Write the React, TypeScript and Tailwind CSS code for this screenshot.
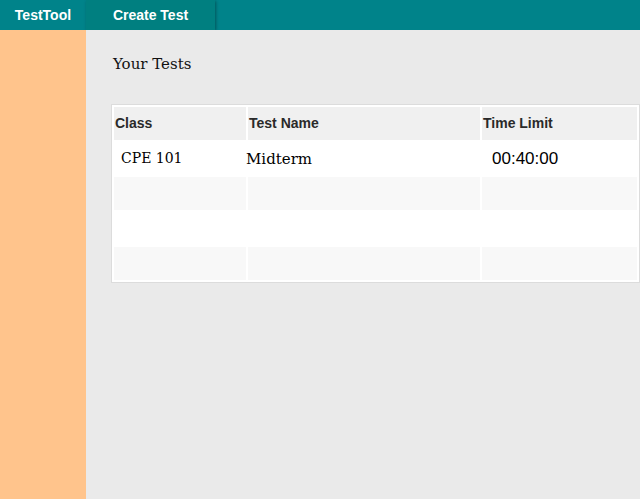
import React from "react";

const rows = [
  { cls: "CPE 101", name: "Midterm", time: "00:40:00" },
  { cls: "", name: "", time: "" },
  { cls: "", name: "", time: "" },
  { cls: "", name: "", time: "" },
];

export default function App() {
  return (
    <div className="h-[501px] w-[640px] overflow-hidden bg-white font-['Liberation_Sans',Arial,sans-serif]">
      {/* top bar */}
      <div className="flex h-[30px] bg-[#00838a]">
        <div className="flex w-[86px] items-center justify-center text-[14px] font-bold text-white">TestTool</div>
        <div className="flex w-[129px] items-center justify-center bg-[#007f80] text-[14px] font-bold text-white shadow-[1px_1px_3px_rgba(0,0,0,0.35)]">
          Create Test
        </div>
      </div>

      <div className="flex h-[469px]">
        <aside className="w-[86px] shrink-0 bg-[#ffc48c]" />
        <main className="flex-1 bg-[#eaeaea] pl-[25px] pt-[23px]">
          <h1 className="pl-[2px] font-['DejaVu_Serif',serif] text-[15px] leading-[22px] text-[#111]">Your Tests</h1>

          <table className="mt-[29px] w-[529px] border-separate border-spacing-[2px] border border-[#dcdcdc] bg-white text-left">
            <thead>
              <tr className="h-[33px]">
                <th className="w-[132px] bg-[#f0f0f0] pl-px text-[14px] font-bold text-[#2a2a2a]">Class</th>
                <th className="w-[232px] bg-[#f0f0f0] pl-px text-[14px] font-bold text-[#2a2a2a]">Test Name</th>
                <th className="bg-[#f0f0f0] pl-px text-[14px] font-bold text-[#2a2a2a]">Time Limit</th>
              </tr>
            </thead>
            <tbody>
              {rows.map((r, i) => (
                <tr key={i} className={i % 2 === 0 ? "h-[33px] bg-white" : "h-[33px] bg-[#f8f8f8]"}>
                  <td className="pl-[7px] font-['DejaVu_Serif',serif] text-[14px] text-black">{r.cls}</td>
                  <td className="font-['DejaVu_Serif',serif] text-[15px] text-black">
                    <span className="relative -left-[2px] top-px">{r.name}</span>
                  </td>
                  <td className="pl-[10px] text-[17px] text-black">{r.time}</td>
                </tr>
              ))}
            </tbody>
          </table>
        </main>
      </div>
    </div>
  );
}
